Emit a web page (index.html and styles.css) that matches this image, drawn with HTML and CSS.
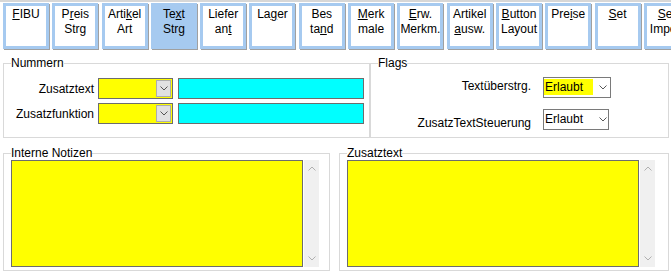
FILE: index.html
```html
<!DOCTYPE html>
<html>
<head>
<meta charset="utf-8">
<link rel="stylesheet" href="styles.css">
</head>
<body>
<div class="toolbar">
  <div class="tb"><u>F</u>IBU</div>
  <div class="tb">P<u>r</u>eis<br>Strg</div>
  <div class="tb">Arti<u>k</u>el<br>Art</div>
  <div class="tb active">Te<u>x</u>t<br>Strg</div>
  <div class="tb">Liefer<br>an<u>t</u></div>
  <div class="tb">La<u>g</u>er</div>
  <div class="tb">Bes<br>ta<u>n</u>d</div>
  <div class="tb"><u>M</u>erk<br>male</div>
  <div class="tb"><u>E</u>rw.<br>Merkm.</div>
  <div class="tb">Artikel<br><u>a</u>usw.</div>
  <div class="tb"><u>B</u>utton<br>Layout</div>
  <div class="tb">Pre<u>i</u>se</div>
  <div class="tb"><u>S</u>et</div>
  <div class="tb"><u>S</u>et<br>Import</div>
</div>

<div class="groups">
  <fieldset class="box nummern">
    <legend>Nummern</legend>
    <div class="nrow">
      <div class="nlabel">Zusatztext</div>
      <div class="combo">
        <div class="dd"><svg width="8" height="5" viewBox="0 0 8 5"><path d="M0.5 0.5 L4 4 L7.5 0.5" fill="none" stroke="#555" stroke-width="1"/></svg></div>
      </div>
      <div class="cyan"></div>
    </div>
    <div class="nrow">
      <div class="nlabel">Zusatzfunktion</div>
      <div class="combo">
        <div class="dd"><svg width="8" height="5" viewBox="0 0 8 5"><path d="M0.5 0.5 L4 4 L7.5 0.5" fill="none" stroke="#555" stroke-width="1"/></svg></div>
      </div>
      <div class="cyan"></div>
    </div>
  </fieldset>
  <fieldset class="box flags">
    <legend>Flags</legend>
    <div class="frow first">
      <div class="flabel">Textüberstrg.</div>
      <div class="fcombo">
        <span class="fval hl">Erlaubt</span>
        <svg class="chev" width="8" height="5" viewBox="0 0 8 5"><path d="M0.5 0.5 L4 4 L7.5 0.5" fill="none" stroke="#444" stroke-width="0.9"/></svg>
      </div>
    </div>
    <div class="frow second">
      <div class="flabel">ZusatzTextSteuerung</div>
      <div class="fcombo narrow">
        <span class="fval">Erlaubt</span>
        <svg class="chev" width="8" height="5" viewBox="0 0 8 5"><path d="M0.5 0.5 L4 4 L7.5 0.5" fill="none" stroke="#444" stroke-width="0.9"/></svg>
      </div>
    </div>
  </fieldset>
</div>

<div class="notes">
  <fieldset class="box memo left">
    <legend>Interne Notizen</legend>
    <div class="memo-body">
      <div class="area"></div>
      <div class="sbar">
        <svg width="8" height="5" viewBox="0 0 8 5"><path d="M0.5 4.5 L4 1 L7.5 4.5" fill="none" stroke="#b0b0b0" stroke-width="1"/></svg>
        <svg width="8" height="5" viewBox="0 0 8 5"><path d="M0.5 0.5 L4 4 L7.5 0.5" fill="none" stroke="#b0b0b0" stroke-width="1"/></svg>
      </div>
    </div>
  </fieldset>
  <fieldset class="box memo right">
    <legend>Zusatztext</legend>
    <div class="memo-body">
      <div class="area"></div>
      <div class="sbar">
        <svg width="8" height="5" viewBox="0 0 8 5"><path d="M0.5 4.5 L4 1 L7.5 4.5" fill="none" stroke="#b0b0b0" stroke-width="1"/></svg>
        <svg width="8" height="5" viewBox="0 0 8 5"><path d="M0.5 0.5 L4 4 L7.5 0.5" fill="none" stroke="#b0b0b0" stroke-width="1"/></svg>
      </div>
    </div>
  </fieldset>
</div>
</body>
</html>
```

FILE: styles.css
```css
* { box-sizing: border-box; }
html, body { margin: 0; padding: 0; }
body {
  width: 671px;
  height: 272px;
  overflow: hidden;
  background: #ffffff;
  font-family: "Liberation Sans", Arial, sans-serif;
  font-size: 12px;
  color: #000;
  border-top: 2px solid #d7d7d7;
}

/* toolbar */
.toolbar {
  display: flex;
  gap: 3.3px;
  padding: 1.3px 0 0 3px;
  white-space: nowrap;
}
.tb {
  flex: 0 0 46px;
  height: 46px;
  border: 3px solid #a6caf0;
  box-shadow: 1px 1px 0 #a0a0a0;
  background: #fff;
  text-align: center;
  line-height: 15px;
  padding-top: 1px;
  overflow: visible;
}
.tb.active { background: #a6caf0; }
.tb u { text-decoration-thickness: 1px; text-underline-offset: 1px; }

/* group boxes */
.box {
  margin: 0;
  padding: 0;
  border: 1px solid #d9d9d9;
  min-width: 0;
}
.box legend {
  padding: 0;
  margin-left: 7px;
  line-height: 14px;
  font-size: 12px;
}

.groups {
  display: flex;
  margin-top: 7px;
  padding-left: 3px;
}
.nummern { width: 367px; height: 82px; }
.flags { width: 299px; height: 82px; }

.nrow {
  display: flex;
  align-items: center;
  height: 21px;
  margin-top: 4px;
}
.nummern .nrow:first-of-type { margin-top: 8px; }
.nlabel {
  width: 90px;
  text-align: right;
  margin-right: 4px;
  line-height: 14px;
}
.combo {
  width: 75px;
  height: 21px;
  border: 1px solid #6d6d6d;
  background: #ffff00;
  margin-right: 5px;
  display: flex;
  justify-content: flex-end;
  padding: 1px;
}
.dd {
  width: 15px;
  height: 100%;
  background: #e1e1e1;
  border: 1px solid #adadad;
  display: flex;
  align-items: center;
  justify-content: center;
}
.cyan {
  width: 186px;
  height: 21px;
  border: 1px solid #6d6d6d;
  background: #00ffff;
}

.frow {
  display: flex;
  align-items: flex-start;
}
.frow.first { margin-top: 7px; }
.frow.second { margin-top: 11px; }
.flabel {
  width: 160px;
  text-align: right;
  margin-right: 12px;
  line-height: 14px;
}
.first .flabel { padding-top: 1.8px; }
.second .flabel { padding-top: 6.4px; }
.fcombo {
  width: 68px;
  height: 21px;
  border: 1px solid #7a7a7a;
  background: #fff;
  display: flex;
  align-items: flex-start;
  padding: 0.7px 0 0 0;
}
.fcombo.narrow { width: 66px; }
.fval {
  display: inline-block;
  width: 49px;
  height: 16px;
  line-height: 16px;
  padding-left: 1px;
}
.fval.hl { background: #ffff00; }
.chev { margin: 6px 0 0 6px; }

/* memos */
.notes {
  display: flex;
  gap: 9px;
  margin-top: 8px;
  padding-left: 3px;
}
.memo { height: 125px; }
.memo.left { width: 327px; }
.memo.right { width: 330px; }
.memo-body {
  display: flex;
  gap: 1px;
  margin-left: 7px;
}
.area {
  width: 292px;
  height: 107px;
  border: 1px solid #6d6d6d;
  background: #ffff00;
}
.sbar {
  width: 15px;
  height: 107px;
  background: #f0f0f0;
  display: flex;
  flex-direction: column;
  align-items: center;
  justify-content: space-between;
  padding: 6px 0 6px 0;
}
```
